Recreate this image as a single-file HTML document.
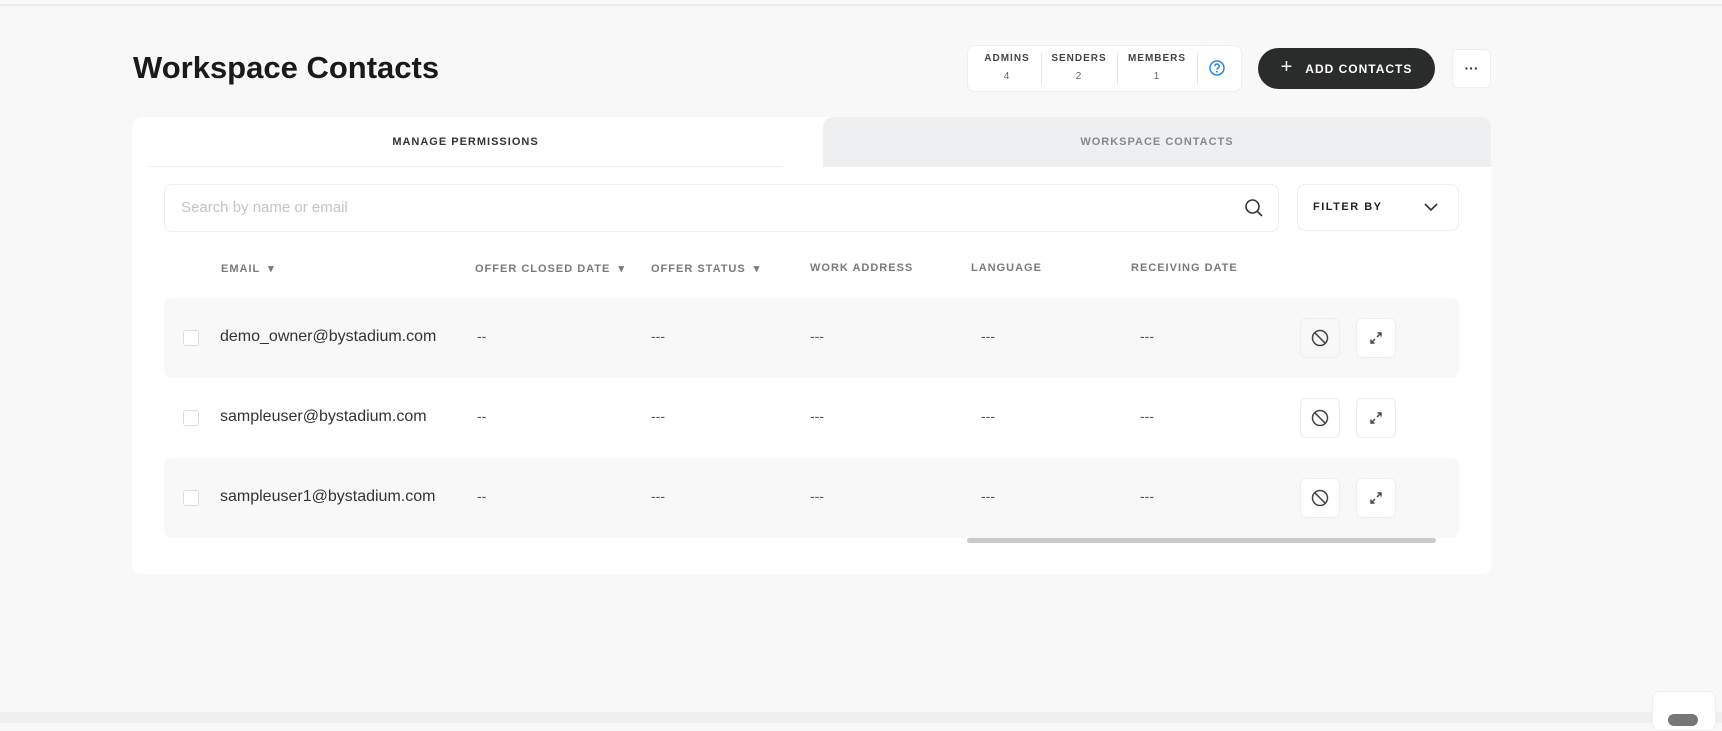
<!DOCTYPE html>
<html><head><meta charset="utf-8"><style>
*{box-sizing:border-box;margin:0;padding:0}
body{width:1722px;height:723px;background:#f8f8f8;font-family:"Liberation Sans",sans-serif;position:relative;overflow:hidden;color:#222}
.a{position:absolute}
.h{font-size:11px;font-weight:bold;letter-spacing:1px;color:#7a7a7a;top:262px}
.em{font-size:16px;color:#333;left:220px}
.d{font-size:14px;color:#555}
.cb{left:183px;width:16px;height:16px;border:1px solid #ddd;border-radius:3px;background:#fff}
.ib{width:40px;height:40px;border:1px solid #eee;border-radius:6px;background:#fff;display:flex;align-items:center;justify-content:center}
.st{top:53px;text-align:center;font-size:10px;font-weight:bold;letter-spacing:1px;color:#444}
.st div{margin-top:7px;font-weight:normal;color:#666}
</style></head><body>
<div class="a" style="left:0;top:4px;width:1722px;height:2px;background:#e6efec"></div>
<div class="a" style="left:133px;top:50px;font-size:31px;font-weight:bold;color:#1a1a1a">Workspace Contacts</div>
<div class="a" style="left:967px;top:45px;width:275px;height:47px;background:#fff;border:1px solid #eee;border-radius:8px"></div>
<div class="a st" style="left:975px;width:64px">ADMINS<div>4</div></div>
<div class="a" style="left:1041px;top:53px;width:1px;height:32px;background:#e6e6e6"></div>
<div class="a st" style="left:1043px;width:72px">SENDERS<div>2</div></div>
<div class="a" style="left:1117px;top:53px;width:1px;height:32px;background:#e6e6e6"></div>
<div class="a st" style="left:1119px;width:76px">MEMBERS<div>1</div></div>
<div class="a" style="left:1197px;top:53px;width:1px;height:32px;background:#e6e6e6"></div>
<svg class="a" style="left:1209px;top:60px" width="16" height="16" viewBox="0 0 16 16"><circle cx="8" cy="8" r="7" fill="none" stroke="#2b88e0" stroke-width="1.5"/><path d="M5.8 6.2a2.2 2.2 0 1 1 3 2c-.6.3-.8.7-.8 1.3" fill="none" stroke="#2b88e0" stroke-width="1.5"/><circle cx="8" cy="11.8" r=".9" fill="#2b88e0"/></svg>
<div class="a" style="left:1258px;top:48px;width:177px;height:41px;background:#2a2b2b;border-radius:21px;color:#fff;font-size:12px;font-weight:bold;letter-spacing:1px;display:flex;align-items:center;justify-content:center"><span style="font-size:20px;font-weight:normal;margin-right:12px;margin-top:-2px">+</span>ADD CONTACTS</div>
<div class="a" style="left:1452px;top:49px;width:39px;height:39px;background:#fff;border:1px solid #eee;border-radius:6px;text-align:center;line-height:36px;font-size:14px;font-weight:bold;color:#333">···</div>
<div class="a" style="left:132px;top:117px;width:1359px;height:457px;background:#fff;border-radius:10px"></div>
<div class="a" style="left:823px;top:117px;width:668px;height:50px;background:#eeeff1;border-radius:10px 10px 0 0"></div>
<div class="a" style="left:132px;top:136px;width:667px;text-align:center;font-size:11px;font-weight:bold;letter-spacing:1px;color:#333">MANAGE PERMISSIONS</div>
<div class="a" style="left:823px;top:136px;width:668px;text-align:center;font-size:11px;font-weight:bold;letter-spacing:1px;color:#888">WORKSPACE CONTACTS</div>
<div class="a" style="left:149px;top:166px;width:633px;height:1px;background:#eee"></div>
<div class="a" style="left:164px;top:184px;width:1115px;height:48px;border:1px solid #eee;border-radius:8px"></div>
<div class="a" style="left:181px;top:199px;font-size:15px;color:#c4c4c4">Search by name or email</div>
<svg class="a" style="left:1244px;top:198px" width="20" height="20" viewBox="0 0 20 20"><circle cx="8.5" cy="8.5" r="6.5" fill="none" stroke="#333" stroke-width="1.6"/><path d="M13.3 13.3L18 18" stroke="#333" stroke-width="1.6"/></svg>
<div class="a" style="left:1297px;top:184px;width:162px;height:47px;border:1px solid #eee;border-radius:8px"></div>
<div class="a" style="left:1313px;top:201px;font-size:11px;font-weight:bold;letter-spacing:1.5px;color:#222">FILTER BY</div>
<svg class="a" style="left:1424px;top:202px" width="14" height="10" viewBox="0 0 14 10"><path d="M1 2l6 6 6-6" fill="none" stroke="#333" stroke-width="1.6"/></svg>
<div class="a h" style="left:221px">EMAIL &nbsp;▾</div>
<div class="a h" style="left:475px">OFFER CLOSED DATE &nbsp;▾</div>
<div class="a h" style="left:651px">OFFER STATUS &nbsp;▾</div>
<div class="a h" style="left:810px">WORK ADDRESS</div>
<div class="a h" style="left:971px">LANGUAGE</div>
<div class="a h" style="left:1131px">RECEIVING DATE</div>
<div class="a" style="left:164px;top:298px;width:1295px;height:80px;background:#f8f8f8;border-radius:8px"></div>
<div class="a" style="left:164px;top:458px;width:1295px;height:80px;background:#f8f8f8;border-radius:8px"></div>
<div class="a" style="left:967px;top:538px;width:469px;height:5px;background:#cacaca;border-radius:3px"></div>

<div class="a cb" style="top:330px"></div><div class="a em" style="top:328px">demo_owner@bystadium.com</div>
<div class="a cb" style="top:410px"></div><div class="a em" style="top:408px">sampleuser@bystadium.com</div>
<div class="a cb" style="top:490px"></div><div class="a em" style="top:488px">sampleuser1@bystadium.com</div>

<div class="a d" style="left:477px;top:328px">--</div><div class="a d" style="left:651px;top:328px">---</div><div class="a d" style="left:810px;top:328px">---</div><div class="a d" style="left:981px;top:328px">---</div><div class="a d" style="left:1140px;top:328px">---</div>
<div class="a d" style="left:477px;top:408px">--</div><div class="a d" style="left:651px;top:408px">---</div><div class="a d" style="left:810px;top:408px">---</div><div class="a d" style="left:981px;top:408px">---</div><div class="a d" style="left:1140px;top:408px">---</div>
<div class="a d" style="left:477px;top:488px">--</div><div class="a d" style="left:651px;top:488px">---</div><div class="a d" style="left:810px;top:488px">---</div><div class="a d" style="left:981px;top:488px">---</div><div class="a d" style="left:1140px;top:488px">---</div>

<div class="a ib" style="left:1300px;top:318px;background:#f8f8f8"><svg width="18" height="18" viewBox="0 0 18 18"><circle cx="9" cy="9" r="7.5" fill="none" stroke="#444" stroke-width="1.5"/><path d="M3.7 3.7l10.6 10.6" stroke="#444" stroke-width="1.5"/></svg></div>
<div class="a ib" style="left:1356px;top:318px"><svg width="16" height="16" viewBox="0 0 16 16"><path d="M9.5 3h3.5v3.5M13 3L9 7M6.5 13H3V9.5M3 13l4-4" fill="none" stroke="#444" stroke-width="1.4"/></svg></div>
<div class="a ib" style="left:1300px;top:398px"><svg width="18" height="18" viewBox="0 0 18 18"><circle cx="9" cy="9" r="7.5" fill="none" stroke="#444" stroke-width="1.5"/><path d="M3.7 3.7l10.6 10.6" stroke="#444" stroke-width="1.5"/></svg></div>
<div class="a ib" style="left:1356px;top:398px"><svg width="16" height="16" viewBox="0 0 16 16"><path d="M9.5 3h3.5v3.5M13 3L9 7M6.5 13H3V9.5M3 13l4-4" fill="none" stroke="#444" stroke-width="1.4"/></svg></div>
<div class="a ib" style="left:1300px;top:478px"><svg width="18" height="18" viewBox="0 0 18 18"><circle cx="9" cy="9" r="7.5" fill="none" stroke="#444" stroke-width="1.5"/><path d="M3.7 3.7l10.6 10.6" stroke="#444" stroke-width="1.5"/></svg></div>
<div class="a ib" style="left:1356px;top:478px"><svg width="16" height="16" viewBox="0 0 16 16"><path d="M9.5 3h3.5v3.5M13 3L9 7M6.5 13H3V9.5M3 13l4-4" fill="none" stroke="#444" stroke-width="1.4"/></svg></div>

<div class="a" style="left:0;top:712px;width:1722px;height:11px;background:#eeeff1"></div>
<div class="a" style="left:1652px;top:691px;width:64px;height:40px;background:#fff;border-radius:8px;border:1px solid #eee"></div>
<div class="a" style="left:1668px;top:714px;width:30px;height:12px;background:#777;border-radius:6px"></div>
</body></html>
